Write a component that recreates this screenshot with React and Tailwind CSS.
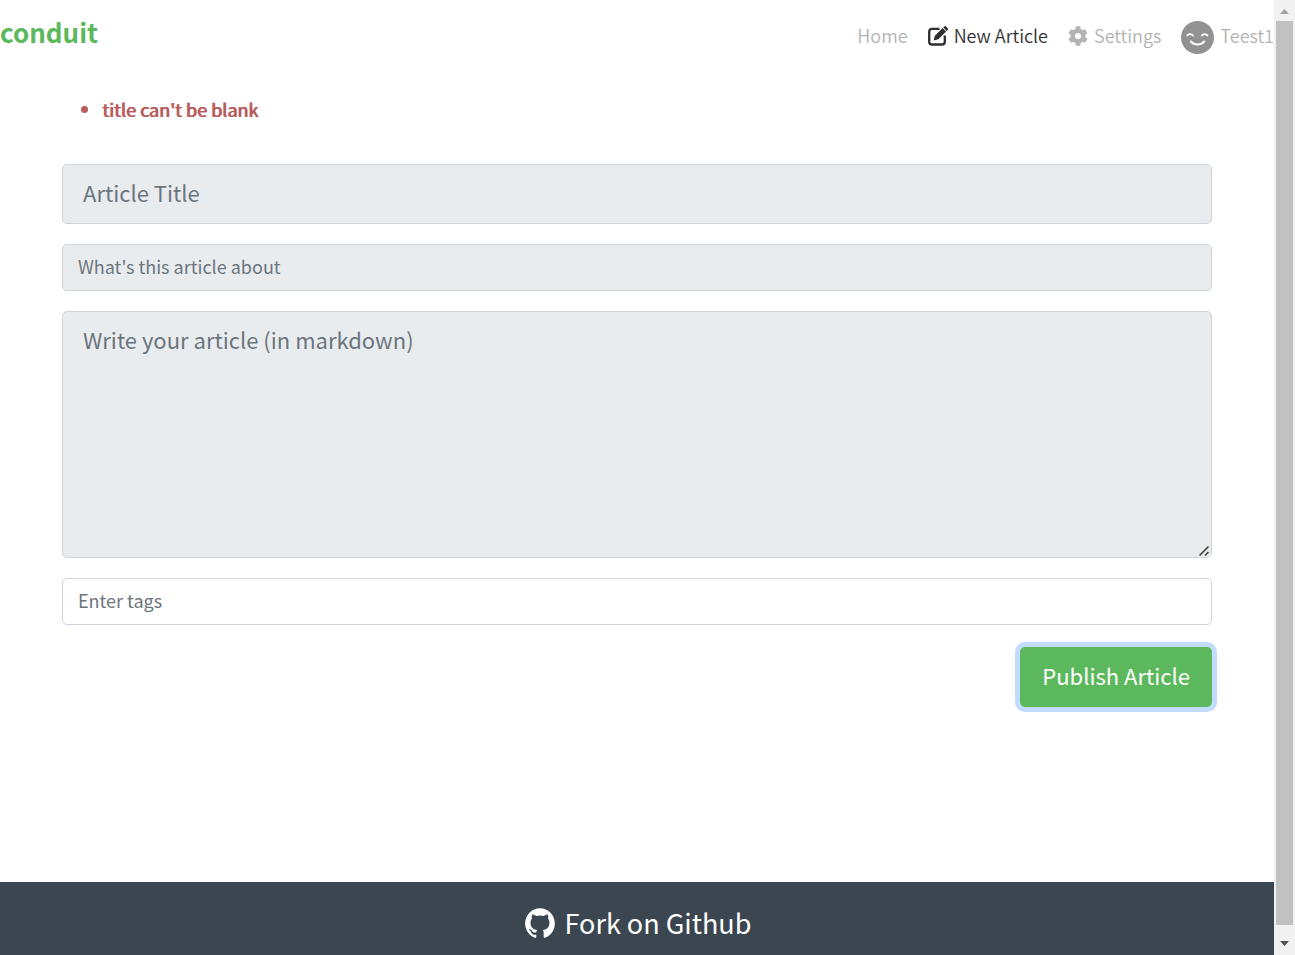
import { FaCog } from "react-icons/fa";
import { IoLogoGithub } from "react-icons/io";

function Smiley() {
  return (
    <svg viewBox="0 0 33 33" className="mr-1.5 size-[33px]" aria-hidden="true">
      <circle cx="16.5" cy="16.5" r="16.5" fill="#929292" />
      <g fill="none" stroke="#fff" strokeWidth="1.9" strokeLinecap="round">
        <path d="M6.300 14.600c1.200-2 4.300-2 5.500 0" />
        <path d="M21 14.600c1.200-2 4.300-2 5.500 0" />
        <path d="M9.800 20.500c3.500 4 10 4 13.500 0" />
      </g>
    </svg>
  );
}

function Compose() {
  return (
    <svg viewBox="0 0 20 20" className="size-5" aria-hidden="true">
      <path d="M11.500 2.900H4a2.800 2.800 0 0 0-2.800 2.800v10A2.800 2.800 0 0 0 4 18.500h10a2.800 2.800 0 0 0 2.800-2.800V9.500" fill="none" stroke="currentColor" strokeWidth="2.3" />
      <path d="M5.600 14.500l1.300-4.700 7.700-7.700 3.500 3.500-7.700 7.700z" fill="currentColor" />
      <path d="M15.300 1.400l.9-.9a1.300 1.300 0 0 1 1.800 0l1.700 1.700a1.300 1.300 0 0 1 0 1.800l-.9.9z" fill="currentColor" />
    </svg>
  );
}

function NavLink({ active, icon, avatar, children }) {
  return (
    <a href="#" className={`flex items-center ${active ? "text-[#2f2f33]" : "text-[#b3b3b3]"}`}>
      {icon && <span className="mr-1.5 pb-0.5">{icon}</span>}
      {avatar}
      <span className="pb-1">{children}</span>
    </a>
  );
}

function Header() {
  return (
    <header className="flex h-[74px] items-center justify-between">
      <a href="#" className="pb-2.5 text-[26px] leading-9 font-bold text-[#5cb85c]">conduit</a>
      <nav className="flex items-center gap-5 text-lg font-[350]">
        <NavLink>Home</NavLink>
        <NavLink active icon={<Compose />}>New Article</NavLink>
        <NavLink icon={<FaCog className="size-5" />}>Settings</NavLink>
        <NavLink avatar={<Smiley />}>Teest1</NavLink>
      </nav>
    </header>
  );
}

const field = "block w-full rounded-[5px] border border-[#ced4da] outline-none placeholder:text-[#6c757d] placeholder:opacity-100";

function Editor() {
  return (
    <main className="px-[62px] pt-5">
      <ul className="mb-10 list-disc pl-10 text-lg leading-[30px] text-[#b85c5c] text-shadow-[1px_0_0_#b85c5c]">
        <li>title can't be blank</li>
      </ul>
      <form className="flex flex-col gap-5">
        <input type="text" aria-label="Article Title" placeholder="Article Title" className={`${field} h-[60px] bg-[#e9ecef] px-5 pb-1 text-[22px]`} />
        <input type="text" aria-label="Description" placeholder="What's this article about" className={`${field} h-[47px] bg-[#e9ecef] px-[15px] pb-1 text-lg`} />
        <div className="relative">
          <textarea aria-label="Article body" placeholder="Write your article (in markdown)" className={`${field} h-[247px] resize-y bg-[#e9ecef] px-5 py-2.5 text-[22px] leading-[34px]`} />
          <svg viewBox="0 0 13 13" className="pointer-events-none absolute right-px bottom-px size-[13px]" aria-hidden="true">
            <path d="M0 0h13v11l-2 2H0z" fill="#e9ecef" />
            <path d="M1.500 11.500l9-9M7 11.500l3.500-3.500" stroke="#444" strokeWidth="1.700" />
          </svg>
        </div>
        <input type="text" aria-label="Tags" placeholder="Enter tags" className={`${field} h-[47px] bg-white px-[15px] pb-1 text-lg`} />
        <button type="button" className="mt-0.5 h-[60px] self-end rounded-[5px] bg-[#5cb85c] px-[22px] pb-1 text-[22px] text-white ring-[5px] ring-[#c2dbfe]">
          Publish Article
        </button>
      </form>
    </main>
  );
}

function Footer() {
  return (
    <footer className="mt-auto flex h-[73px] items-center justify-center bg-[#3c4650] pt-2 text-white">
      <a href="#" className="flex items-center gap-2 text-[27px] leading-10">
        <IoLogoGithub className="size-[34px]" />
        <span>Fork on Github</span>
      </a>
    </footer>
  );
}

function ScrollBar() {
  return (
    <div className="flex w-[21px] flex-none flex-col items-center bg-[#f1f1f1]" aria-hidden="true">
      <svg viewBox="0 0 21 21" className="h-[21px] w-[21px]"><path d="M6 14h9l-4.500-5z" fill="#a3a3a3" /></svg>
      <div className="w-[17px] flex-1 bg-[#c1c1c1]" />
      <svg viewBox="0 0 21 30" className="h-[30px] w-[21px]"><path d="M6 16h9l-4.500 5z" fill="#505050" /></svg>
    </div>
  );
}

export default function App() {
  return (
    <div className="flex min-h-screen bg-white font-['Noto_Sans_CJK_SC','Noto_Sans_CJK_JP',sans-serif]">
      <div className="flex min-w-0 flex-1 flex-col">
        <Header />
        <Editor />
        <Footer />
      </div>
      <ScrollBar />
    </div>
  );
}
